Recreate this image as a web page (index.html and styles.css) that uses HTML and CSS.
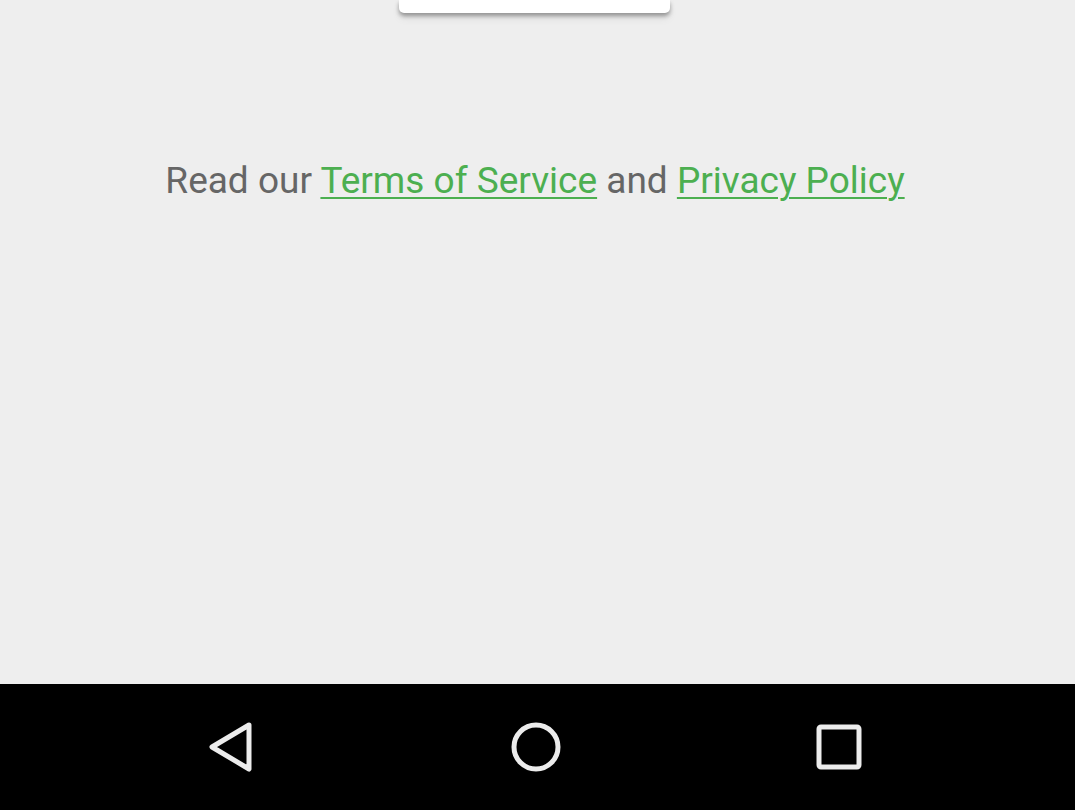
FILE: index.html
```html
<!DOCTYPE html>
<html>
<head>
<meta charset="utf-8">
<link rel="stylesheet" href="styles.css">
</head>
<body>
<div class="screen">
  <div class="content">
    <div class="card-wrap"><div class="card"></div></div>
    <p class="legal">Read our <a href="#" class="link">Terms of Service</a> and <a href="#" class="link">Privacy Policy</a></p>
  </div>
  <nav class="navbar">
    <div class="nav-btn">
      <svg width="48" height="52" viewBox="0 0 48 52"><path d="M42 4 L5 26 L42 48 Z" fill="none" stroke="#ececec" stroke-width="5" stroke-linejoin="round"/></svg>
    </div>
    <div class="nav-btn">
      <svg width="50" height="50" viewBox="0 0 50 50"><circle cx="25" cy="25" r="22" fill="none" stroke="#ececec" stroke-width="5"/></svg>
    </div>
    <div class="nav-btn">
      <svg width="46" height="46" viewBox="0 0 46 46"><rect x="3" y="3" width="40" height="40" rx="2" fill="none" stroke="#ececec" stroke-width="5"/></svg>
    </div>
  </nav>
</div>
</body>
</html>
```
FILE: styles.css
```css
html, body {
  margin: 0;
  padding: 0;
}
body {
  width: 1075px;
  height: 810px;
  overflow: hidden;
  background: #eeeeee;
  font-family: Roboto, "Liberation Sans", sans-serif;
}
.screen {
  display: flex;
  flex-direction: column;
  height: 810px;
}
.content {
  flex: 1;
  display: flex;
  flex-direction: column;
  align-items: center;
}
.card-wrap {
  height: 13px;
  width: 100%;
  display: flex;
  justify-content: center;
}
.card {
  width: 271px;
  height: 13px;
  margin-right: 6px;
  background: #ffffff;
  border-radius: 0 0 5px 5px;
  box-shadow: 0 3px 4px rgba(0,0,0,0.35), 0 6px 8px rgba(0,0,0,0.06);
}
.legal {
  margin: 147px 5px 0 0;
  font-size: 37px;
  line-height: 42px;
  color: #666666;
  text-align: center;
}
.link {
  color: #4caf50;
  text-decoration: underline;
  text-decoration-thickness: 2px;
  text-underline-offset: 4px;
}
.navbar {
  height: 126px;
  background: #000000;
  display: flex;
  align-items: center;
  justify-content: space-between;
  padding: 0 213px 0 207px;
}
.nav-btn {
  display: flex;
  align-items: center;
  justify-content: center;
}
.nav-btn svg {
  display: block;
}
```
